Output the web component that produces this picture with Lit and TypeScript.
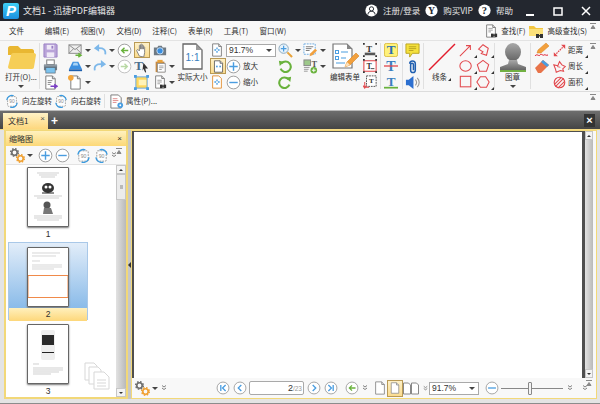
import { LitElement, html, css, svg, TemplateResult } from "lit";
import { customElement } from "lit/decorators.js";

// icon bodies, all drawn in a 16x16 box unless the caller says otherwise
const RED = "#e2484d";
const BLUE = "#4a9de0";
const GREEN = "#69b23c";
const DARK = "#23272f";

const glyph = (x: number, y: number, size: number, fill: string, text = "T") =>
  svg`<text x=${x} y=${y} font-size=${size} font-family="Liberation Serif" font-weight="700" fill=${fill} text-anchor="middle">${text}</text>`;

const handles = svg`<g fill="#333"><rect x="0" y="0" width="2" height="2"/><rect x="14" y="0" width="2" height="2"/><rect x="0" y="14" width="2" height="2"/><rect x="14" y="14" width="2" height="2"/></g>`;
const page = svg`<path d="M3 1h7l3 3v11H3z" fill="#fff" stroke="#777"/><path d="M10 1v3h3" fill="#ddd" stroke="#777"/>`;
const binoc = svg`<g fill="#333"><rect x="8" y="11" width="3" height="4"/><rect x="12" y="11" width="3" height="4"/><rect x="10" y="12" width="3" height="1.500"/></g>`;
const gear = (cx: number, cy: number, c: string) =>
  svg`<circle cx=${cx} cy=${cy} r="2.700" fill="none" stroke=${c} stroke-width="1.600"/><circle cx=${cx} cy=${cy} r="3.800" fill="none" stroke=${c} stroke-width="1.500" stroke-dasharray="1.500 1.500"/>`;

const ICONS: Record<string, TemplateResult> = {
  save: svg`<path d="M1 1h13l1 1v13H1z" fill="#b9a3d8" stroke="#9a80c4"/><rect x="4" y="2" width="8" height="5" fill="#efe9f7"/><rect x="4" y="10" width="8" height="5" fill="#efe9f7"/><rect x="9" y="3" width="2" height="3" fill="#9a80c4"/>`,
  print: svg`<rect x="4" y="1" width="8" height="5" fill="#fff" stroke="#777"/><path d="M1 6h14v6H1z" fill="#6f7a84"/><rect x="1" y="6" width="14" height="2" fill="#8e99a3"/><rect x="3" y="9" width="10" height="6" fill="#7cc3ee" stroke="#5a6570" stroke-width=".7"/>`,
  exportdoc: svg`${page}<path d="M5 6h5M5 8h4M5 10h3" stroke="#888"/><path d="M8 12h6M12 10l3 2-3 2" fill="none" stroke="#7a3fc4" stroke-width="1.400"/>`,
  mail: svg`<rect x="1" y="2" width="13" height="9" fill="#eee" stroke="#888"/><path d="M1 2l6.500 5L14 2M1 11l5-5M14 11L9 6" fill="none" stroke="#888"/><path d="M8 13h5M11 11l3 2-3 2" fill="none" stroke="${GREEN}" stroke-width="1.500"/>`,
  scan: svg`<path d="M5 3h6l4 8H1z" fill="#3c8fe0"/><path d="M1 11h14v2H1z" fill="#1d5fae"/><path d="M6 4h4l1 3H5z" fill="#a8d3f5"/>`,
  newdoc: svg`${page}<circle cx="3" cy="3" r="3" fill="#f4a63a"/>`,
  undo: svg`<path d="M14 13c1-5-2-8-9-7" fill="none" stroke="#7db8ea" stroke-width="2"/><path d="M7 1L1 6l6 4z" fill="#7db8ea"/>`,
  redo: svg`<path d="M2 13C1 8 4 5 11 6" fill="none" stroke="#7db8ea" stroke-width="2"/><path d="M9 1l6 5-6 4z" fill="#7db8ea"/>`,
  back: svg`<circle cx="8" cy="8" r="6.800" fill="#fff" stroke="#9a9a9a"/><path d="M12 8H5M8 5L5 8l3 3" fill="none" stroke="${GREEN}" stroke-width="1.500"/>`,
  fwd: svg`<circle cx="8" cy="8" r="6.800" fill="#fff" stroke="#bdbdbd"/><path d="M4 8h7M8 5l3 3-3 3" fill="none" stroke="#b9d9a5" stroke-width="1.500"/>`,
  hand: svg`<path d="M5 15L2 9c-.5-1 1-2 2-1l1 1V3c0-1 1.500-1 1.500 0v4-5c0-1 1.500-1 1.500 0v5-4c0-1 1.500-1 1.500 0v4-2c0-1 1.500-1 1.500 0v6l-1 5z" fill="#fff" stroke="#777"/>`,
  textsel: svg`${glyph(5, 12, 14, "#4d6f8d")}<path d="M10 4l5 6h-3l1 4-1 .5-2-4-1 2z" fill="#333"/>`,
  snap: svg`<rect x="2" y="2" width="12" height="12" fill="#ffd75a" stroke="#68a8e0"/><rect x="5" y="5" width="8" height="6" fill="#fff3b8"/><g fill="${BLUE}"><rect x="0" y="0" width="3" height="3"/><rect x="13" y="0" width="3" height="3"/><rect x="0" y="13" width="3" height="3"/><rect x="13" y="13" width="3" height="3"/></g>`,
  camera: svg`<path d="M1 5h4l1-2h4l1 2h4v9H1z" fill="#6f7a84"/><circle cx="8" cy="9" r="3.600" fill="#3a8ee0" stroke="#cfe4f7"/>`,
  clip: svg`<path d="M3 3h10v12H3z" fill="#c98a3e"/><path d="M5 5h9v10H5z" fill="#fff" stroke="#888"/><rect x="5" y="1" width="6" height="3" fill="#e9a33a"/><path d="M7 8h5M7 10h5M7 12h3" stroke="#999"/>`,
  finddoc: svg`${page}<path d="M5 6h5M5 8h5M5 10h3" stroke="#999"/>${binoc}`,
  fitw: svg`${page}<path d="M8 5v2M8 9v2M5 8h2M9 8h2" stroke="${BLUE}" stroke-width="1.500"/>`,
  fitp: svg`<path d="M3 1h7l3 3v11H3z" fill="#fff" stroke="#555"/><path d="M10 1v3h3" fill="#ddd" stroke="#555"/><rect x="5" y="7" width="2" height="2" fill="${BLUE}"/><rect x="9" y="7" width="2" height="2" fill="${BLUE}"/>`,
  fito: svg`<path d="M3 1h7l3 3v11H3z" fill="#fff" stroke="#e08a2a"/><path d="M8 5v2M8 9v2M5 8h2M9 8h2" stroke="${BLUE}" stroke-width="1.500"/>`,
  plus: svg`<circle cx="8" cy="8" r="6.800" fill="#fff" stroke="#9a9a9a"/><path d="M3.500 8h9M8 3.500v9" stroke="${BLUE}" stroke-width="1.500"/>`,
  minus: svg`<circle cx="8" cy="8" r="6.800" fill="#fff" stroke="#9a9a9a"/><path d="M3.500 8h9" stroke="${BLUE}" stroke-width="1.500"/>`,
  zoomin: svg`<circle cx="6" cy="6" r="5" fill="#e6f2fb" stroke="#8aa7bd"/><path d="M3 6h6M6 3v6" stroke="${BLUE}" stroke-width="1.300"/><path d="M10 10l5 5" stroke="#e8a33a" stroke-width="2.200"/>`,
  rotl: svg`<path d="M4 5a6 6 0 1 1-1 6" fill="none" stroke="${GREEN}" stroke-width="2.400"/><path d="M1 2l6 1-5 5z" fill="${GREEN}"/>`,
  rotr: svg`<path d="M12 5a6 6 0 1 0 1 6" fill="none" stroke="${GREEN}" stroke-width="2.400"/><path d="M15 2l-6 1 5 5z" fill="${GREEN}"/>`,
  formtext: svg`<rect x="1" y="1" width="12" height="11" fill="#fff" stroke="#68a8e0" stroke-dasharray="2 1"/><path d="M3 4h8M3 6h6M3 8h4" stroke="#777"/><path d="M7 14l1-3 5-5 2 2-5 5z" fill="#f2a03d"/>`,
  formimg: svg`<rect x="1" y="1" width="7" height="6" fill="#9dc88a" stroke="#888"/>${glyph(12, 8, 9, "#555")}<path d="M1 9h6M1 11h5M1 13h4" stroke="#999"/><circle cx="11.500" cy="12" r="3.500" fill="${GREEN}"/><path d="M9.500 12h4M11.500 10v4" stroke="#fff"/>`,
  editform: svg`<path d="M2 1h14l5 5v19H2z" fill="#fff" stroke="#777" stroke-width="1.200"/><path d="M16 1v5h5z" fill="#888"/><g fill="#fff" stroke="${BLUE}"><rect x="4.500" y="7.500" width="3" height="3"/><rect x="4.500" y="13.500" width="3" height="3"/></g><path d="M10 9h7M10 15h5M5 20h9" stroke="${BLUE}" stroke-width="1.200"/><path d="M14 24l2-5 9-9 3 3-9 9z" fill="#f2a03d" stroke="#d98420" stroke-width=".6"/><path d="M14 24l2-5 3 3z" fill="#fbe2bd"/>`,
  tbox1: svg`${handles}${glyph(7, 10, 10, "#333")}<rect x="2" y="11" width="12" height="3" fill="#555"/>`,
  tbox2: svg`<rect x="1" y="2" width="14" height="12" fill="#fff" stroke="${RED}" stroke-width="1.200"/>${handles}${glyph(7, 11, 9, "#333")}<path d="M9 11h4" stroke="#333"/>`,
  tbox3: svg`<rect x="4" y="1" width="11" height="12" fill="#fff" stroke="#444" stroke-dasharray="2 1"/>${glyph(9.500, 9, 8, "#333")}<path d="M2 8v6h5M0 12l2 3 2-3" fill="none" stroke="${RED}" stroke-width="1.200"/>`,
  thi: svg`<rect x=".5" y=".5" width="15" height="15" rx="2" fill="#fff27a" stroke="#d9b93a"/>${glyph(8, 13, 15, "#2a6fb3")}`,
  tstrike: svg`${glyph(8, 14, 16, "#3a7fc0")}<path d="M0 8h16" stroke="${RED}" stroke-width="1.500"/>`,
  tunder: svg`${glyph(8, 12, 15, "#3a7fc0")}<path d="M0 14.500h16" stroke="${GREEN}" stroke-width="2"/>`,
  note: svg`<path d="M1 1h14v10H8l-3 4v-4H1z" fill="#f5e13c" stroke="#b9a21f"/><path d="M4 4h8M4 6h8M4 8h5" stroke="#b9a21f"/>`,
  paperclip: svg`<path d="M5 5a3 3 0 0 1 6 0v7a2.500 2.500 0 0 1-5 0V6a1.500 1.500 0 0 1 3 0v6" fill="none" stroke="#1f5fb0" stroke-width="1.600"/>`,
  speaker: svg`<path d="M1 5h3l5-4v14l-5-4H1z" fill="#2c6fd0"/><path d="M11 5a4 4 0 0 1 0 6M13 3a7 7 0 0 1 0 10" fill="none" stroke="#999" stroke-width="1.200"/>`,
  arrow: svg`<path d="M1 15L13 3M8 3h5v5" fill="none" stroke="${RED}" stroke-width="1.200"/>`,
  circle: svg`<ellipse cx="7.500" cy="8" rx="6.500" ry="6" fill="none" stroke="${RED}" stroke-width="1.200"/>`,
  rect: svg`<rect x="1.500" y="1.500" width="12" height="12" fill="none" stroke="${RED}" stroke-width="1.200"/>`,
  polyopen: svg`<path d="M3 7l5-5 6 4-2 8-6-2 2-2z" fill="none" stroke="${RED}" stroke-width="1.200"/>`,
  pent: svg`<path d="M8 1.500l6.500 5-2.500 7.500H4L1.500 6.500z" fill="none" stroke="${RED}" stroke-width="1.200"/>`,
  hex: svg`<path d="M5 2h6l4 6-3 6H5L1 8z" fill="none" stroke="${RED}" stroke-width="1.200"/>`,
  pencil: svg`<path d="M3 11l1-3 8-7 3 3-8 7z" fill="#f2a03d" stroke="#d98420" stroke-width=".5"/><path d="M1 14c2-3 4 1 5-1s3 1 4 0 2 1 4 0" fill="none" stroke="#e21c2c"/>`,
  eraser: svg`<path d="M1 10l8-8 6 5-8 8H4z" fill="#e8744a"/><path d="M7 4l2-2 6 5-2 2z" fill="#4a9de0"/>`,
  dist: svg`<path d="M2 14L14 2" stroke="${RED}" stroke-width="1.500" stroke-dasharray="2 1"/><path d="M1 10v5h5zM15 6V1h-5z" fill="${RED}"/>`,
  perim: svg`<path d="M1 6l5 1 2-5 3 4 4 2-3 3 1 3-4-1-5 2-1-4z" fill="none" stroke="${RED}" stroke-width="1.300"/><path d="M5 8l4 1" stroke="${RED}"/>`,
  area: svg`<circle cx="8" cy="8" r="6.500" fill="none" stroke="${RED}" stroke-width="1.400"/><path d="M2 10l8-8M3 13l10-10M6 15l8-8" stroke="${RED}" stroke-width="1.300"/>`,
  find: svg`${page}<path d="M5 5h5M5 7h5M5 9h3" stroke="#999"/>${binoc}`,
  findadv: svg`<path d="M1 3h5l2 2h7v8H1z" fill="#f3c640"/><path d="M1 6h14v7H1z" fill="#fbe07a"/>${binoc}`,
  rot90l: svg`<rect x="3" y="3" width="10" height="11" rx="1" fill="#fff" stroke="#999" stroke-dasharray="2 1"/><path d="M2 7a6 6 0 0 1 8-5M14 10a6 6 0 0 1-8 5" fill="none" stroke="#3a9be0" stroke-width="1.400"/><text x="8" y="10.500" font-size="5.500" text-anchor="middle" fill="#888" font-family="Liberation Sans">90</text>`,
  rot90r: svg`<rect x="3" y="3" width="10" height="11" rx="1" fill="#fff" stroke="#999" stroke-dasharray="2 1"/><path d="M14 7a6 6 0 0 0-8-5M2 10a6 6 0 0 0 8 5" fill="none" stroke="#3a9be0" stroke-width="1.400"/><text x="8" y="10.500" font-size="5.500" text-anchor="middle" fill="#888" font-family="Liberation Sans">90</text>`,
  props: svg`<path d="M2 1h8l3 3v11H2z" fill="#fff" stroke="#777"/><path d="M4 5h5M4 7h6M4 9h4" stroke="#e08a8a"/><circle cx="12" cy="12" r="3" fill="#4a9de0"/><circle cx="12" cy="12" r="1" fill="#fff"/>`,
  gears: svg`${gear(5.500, 5.500, "#6d6d6d")}${gear(11.500, 11.500, "#f0a030")}`,
  first: svg`<circle cx="8" cy="8" r="6.800" fill="#fff" stroke="#9a9a9a"/><path d="M5.500 4.500v7" stroke="${BLUE}" stroke-width="1.500"/><path d="M11 4.500L7.500 8l3.500 3.500" fill="none" stroke="${BLUE}" stroke-width="1.500"/>`,
  prev: svg`<circle cx="8" cy="8" r="6.800" fill="#fff" stroke="#9a9a9a"/><path d="M9.500 4.500L6 8l3.500 3.500" fill="none" stroke="${BLUE}" stroke-width="1.500"/>`,
  next: svg`<circle cx="8" cy="8" r="6.800" fill="#fff" stroke="#9a9a9a"/><path d="M6.500 4.500L10 8l-3.500 3.500" fill="none" stroke="${BLUE}" stroke-width="1.500"/>`,
  last: svg`<circle cx="8" cy="8" r="6.800" fill="#fff" stroke="#9a9a9a"/><path d="M10.500 4.500v7" stroke="${BLUE}" stroke-width="1.500"/><path d="M5 4.500L8.500 8 5 11.500" fill="none" stroke="${BLUE}" stroke-width="1.500"/>`,
  single: svg`<path d="M3 1h7l3 3v11H3z" fill="#fff" stroke="#888"/><path d="M10 1v3h3" fill="#ddd" stroke="#888"/>`,
  two: svg`<path d="M.5 3h5l2 2v9h-7z" fill="#fff" stroke="#888"/><path d="M8.500 3h5l2 2v9h-7z" fill="#fff" stroke="#888"/>`,
  more: svg`<path d="M4 3l4 3 4-3M4 8l4 3 4-3" fill="none" stroke="#555" stroke-width="1.500"/>`,
  user: svg`<circle cx="8" cy="8" r="7.500" fill="#fff"/><circle cx="8" cy="6" r="2.600" fill="none" stroke="${DARK}" stroke-width="1.200"/><path d="M3.500 13c.5-3 2-4 4.500-4s4 1 4.500 4" fill="none" stroke="${DARK}" stroke-width="1.200"/>`,
  vip: svg`<circle cx="8" cy="8" r="7.500" fill="#fff"/>${glyph(8, 12.500, 12, DARK, "Y")}`,
  help: svg`<circle cx="8" cy="8" r="7.500" fill="#fff"/>${glyph(8, 12.500, 13, DARK, "?")}`,
};

const icon = (name: string, w = 15, h = w) =>
  html`<svg class="ic" width=${w} height=${h} viewBox="0 0 16 ${(16 * h) / w}">${ICONS[name]}</svg>`;

const caret = html`<i class="caret"></i>`;
const corner = html`<i class="corner"></i>`;
const pin = html`<svg class="pin" width="6" height="6" viewBox="0 0 6 6"><path d="M0 .5h6M1 5.500l2-3 2 3z" stroke="#888" fill="#888" /></svg>`;

const MENUS = ["文件", "编辑(E)", "视图(V)", "文档(D)", "注释(C)", "表单(R)", "工具(T)", "窗口(W)"];

@customElement("app-root")
export class AppRoot extends LitElement {
  static styles = css`
    :host {
      display: block;
      width: 600px;
      height: 404px;
      overflow: hidden;
      background: #e4e4e4;
      font-family: "Noto Sans CJK SC", "Liberation Sans", sans-serif;
      font-size: 7.500px;
      color: #2e2e2e;
      line-height: 1;
    }
    .ic {
      display: block;
      flex: none;
    }
    .caret {
      display: block;
      flex: none;
      width: 0;
      height: 0;
      border: 3px solid transparent;
      border-top-color: #444;
      border-bottom: 0;
    }
    .corner {
      display: block;
      flex: none;
      align-self: flex-end;
      width: 0;
      height: 0;
      border-left: 3px solid transparent;
      border-bottom: 3px solid #333;
    }
    .pin {
      display: block;
    }
    .pinned {
      position: absolute;
      right: 4px;
      top: 2px;
    }

    /* title bar */
    .title {
      height: 21px;
      background: #23272f;
      color: #e6e6e6;
      display: flex;
      align-items: center;
      padding-left: 3px;
      font-size: 9px;
    }
    .logo {
      width: 16px;
      height: 16px;
      border-radius: 2px;
      background: linear-gradient(#3fd0f7, #1a8fe0);
      color: #fff;
      font: italic bold 15px/16px "Liberation Sans", sans-serif;
      text-align: center;
      margin-right: 4px;
    }
    .doc-name {
      flex: 1;
    }
    .account {
      display: flex;
      align-items: center;
      font-size: 8.500px;
    }
    .account .ic {
      margin-right: 5px;
    }
    .account span {
      margin-right: 5px;
    }
    .winbtns {
      display: grid;
      grid-template-columns: 27px 28px 10px;
      align-items: center;
      width: 82px;
      padding-left: 8px;
      box-sizing: border-box;
    }
    .winbtns svg {
      display: block;
    }

    /* menu row */
    .menu {
      height: 19px;
      background: #f8f8f8;
      display: flex;
      align-items: center;
      padding-left: 9px;
      position: relative;
    }
    .menu > span {
      width: 35.800px;
    }
    .menu .grow {
      flex: 1;
    }
    .finds {
      display: flex;
      align-items: center;
      gap: 3px;
      padding-right: 13px;
    }

    /* ribbon, one track per tool column */
    .ribbon {
      height: 52px;
      background: #f7f7f7;
      border-top: 1px solid #e3e3e3;
      border-bottom: 1px solid #dcdcdc;
      box-sizing: border-box;
      padding-left: 3px;
      position: relative;
      display: grid;
      grid-template-columns:
        36px 1px 28px 25px 24px 17px 19px 24px 31px 18px 52px 25px 26px 32px 19px 1px 21px 1px 20px
        1px 35px 17px 18px 1px 35px 1px 22px 39px;
    }
    .sep {
      background: #e0e0e0;
      margin: 2px 0;
    }
    .big {
      display: flex;
      flex-direction: column;
      align-items: center;
      padding-top: 2px;
    }
    .art {
      height: 30px;
      flex: none;
    }
    .big b {
      font-weight: 400;
      height: 8px;
      white-space: nowrap;
      display: flex;
      align-items: center;
      gap: 1px;
    }
    .big .caret {
      margin-top: 4px;
    }
    .col {
      display: grid;
      grid-template-rows: repeat(3, 16px);
      align-items: center;
      justify-items: start;
      padding-top: 1px;
    }
    .p2 {
      padding-left: 2px;
    }
    .p3 {
      padding-left: 3px;
    }
    .row {
      display: flex;
      align-items: center;
      gap: 2px;
      height: 16px;
    }
    .row.tight {
      gap: 1px;
    }
    .on {
      display: flex;
      align-items: center;
      justify-content: center;
      width: 16px;
      height: 16px;
      box-sizing: border-box;
      background: linear-gradient(#fdf0c8, #fbdc8e);
      border: 1px solid #b99a55;
    }
    .zoombox {
      width: 50px;
      height: 13px;
      box-sizing: border-box;
      border: 1px solid #a9a9a9;
      background: #fff;
      display: flex;
      align-items: center;
      justify-content: space-between;
      padding: 0 3px 0 2px;
      font: 8.500px "Liberation Sans", sans-serif;
      color: #333;
    }

    /* small toolbar */
    .bar2 {
      height: 19px;
      background: #f8f8f8;
      border-bottom: 1px solid #b9b9b9;
      box-sizing: border-box;
      display: flex;
      align-items: center;
      padding-left: 5px;
      position: relative;
    }
    .bar2 span {
      margin: 0 2px 0 3px;
      white-space: nowrap;
    }
    .bar2 span.last {
      margin: 0 3px 0 3px;
    }
    .bar2 .sep {
      width: 1px;
      height: 14px;
      margin: 0 4px 0 0;
    }
    .bar2 .props {
      margin: 0 0 0 2px;
    }

    /* document tabs */
    .tabs {
      height: 18px;
      background: linear-gradient(#6e6e6e, #454545);
      display: flex;
      align-items: flex-end;
      padding-left: 3px;
      position: relative;
      box-sizing: border-box;
    }
    .tab {
      width: 45px;
      height: 16px;
      box-sizing: border-box;
      background: linear-gradient(#fff2c6, #fdd77d);
      padding: 4px 0 0 5px;
      position: relative;
      font-size: 8px;
    }
    .tab u {
      position: absolute;
      right: 3px;
      top: 1px;
      text-decoration: none;
      font: 8px "Liberation Sans", sans-serif;
      color: #555;
    }
    .add {
      color: #fff;
      font: bold 12px/15px "Liberation Sans", sans-serif;
      margin-left: 3px;
    }
    .tabs .close {
      position: absolute;
      right: 5px;
      top: 3px;
      width: 11px;
      height: 13px;
      background: #333;
      color: #fff;
      font: bold 11px/13px "Liberation Sans", sans-serif;
      text-align: center;
    }

    /* work area */
    .work {
      height: 275px;
      box-sizing: border-box;
      border-top: 1px solid #f7dc85;
      border-bottom: 1px solid #8c8c8c;
      display: flex;
      padding: 0 3px 4px 4px;
    }
    .panel {
      width: 124px;
      flex: none;
      background: #fff;
      border: solid #f2d878;
      border-width: 1px 2px 2px 2px;
      box-sizing: border-box;
      display: flex;
      flex-direction: column;
    }
    .panel-head {
      height: 15px;
      flex: none;
      background: linear-gradient(#fff1bf, #fcd877);
      display: flex;
      align-items: center;
      justify-content: space-between;
      padding: 0 4px 0 3px;
      font-size: 8px;
    }
    .panel-head u {
      text-decoration: none;
      font: 8px "Liberation Sans", sans-serif;
    }
    .panel-tools {
      height: 19px;
      flex: none;
      background: #f8f8f8;
      border-bottom: 1px solid #e3e3e3;
      box-sizing: border-box;
      display: grid;
      grid-template-columns: 29px 17px 21px 18px 16px 9px 6px;
      align-items: center;
      padding-left: 3px;
      position: relative;
    }
    .panel-body {
      flex: 1;
      min-height: 0;
      display: flex;
    }
    .list {
      flex: 1;
      padding: 2px 0 0 2px;
      position: relative;
      overflow: hidden;
    }
    .thumb {
      width: 80px;
      display: flex;
      flex-direction: column;
      align-items: center;
      font: 8.500px "Liberation Sans", sans-serif;
    }
    .thumb em {
      font-style: normal;
      height: 15px;
      line-height: 15px;
      align-self: stretch;
      text-align: center;
    }
    .thumb.sel {
      background: linear-gradient(#e2edf9, #7ab2e6);
      height: 78px;
      box-sizing: border-box;
      padding-top: 4px;
      border: solid #a9c8e8;
      border-width: 1px 1px 0 1px;
    }
    .thumb.sel em {
      background: linear-gradient(#fff0bd, #fdd77a);
      height: 13px;
      line-height: 13px;
      margin-top: 1px;
    }
    .thumb.last {
      padding-top: 4px;
    }
    .page {
      width: 42px;
      height: 60px;
      box-sizing: border-box;
      flex: none;
      display: block;
      background: #fff;
      border: 1px solid #666;
      border-radius: 1px;
      box-shadow: 0 1px 2px #777;
    }
    .ghost {
      position: absolute;
      right: 6px;
      bottom: 7px;
      opacity: 0.32;
    }
    .sb {
      width: 10px;
      flex: none;
      background: linear-gradient(90deg, #e2e2e2, #b9b9b9);
      display: flex;
      flex-direction: column;
      justify-content: space-between;
    }
    .sb-btn {
      height: 9px;
      background: #f4f4f4;
      border: 1px solid #c6c6c6;
      box-sizing: border-box;
      display: flex;
      align-items: center;
      justify-content: center;
    }
    .sb-up {
      width: 0;
      height: 0;
      border: 2.500px solid transparent;
      border-bottom-color: #333;
      border-top: 0;
    }
    .sb-down {
      width: 0;
      height: 0;
      border: 2.500px solid transparent;
      border-top-color: #333;
      border-bottom: 0;
    }
    .sb-top {
      display: flex;
      flex-direction: column;
    }
    .sb-thumb {
      height: 26px;
      background: #ececec;
      border: 1px solid #c6c6c6;
      box-sizing: border-box;
      display: flex;
      align-items: center;
      justify-content: center;
    }
    .sb-thumb i {
      width: 3px;
      height: 4px;
      background: #b9b9b9;
    }
    .split {
      width: 3px;
      flex: none;
      background: #c7c7c7;
      display: flex;
      align-items: center;
    }
    .split i {
      display: block;
      width: 0;
      height: 0;
      border: 3px solid transparent;
      border-right-color: #333;
      border-left: 0;
    }
    .viewer {
      flex: 1;
      min-width: 0;
      display: flex;
      flex-direction: column;
      border: 1px solid #f2d878;
      background: #f8f8f8;
    }
    .view-main {
      flex: 1;
      min-height: 0;
      display: flex;
    }
    .view-dark {
      flex: 1;
      display: flex;
      background: #4f4f4f;
      padding: 1px 3px 0 2px;
    }
    .sheet {
      flex: 1;
      background: #fff;
    }
    .view-sb {
      width: 8px;
      flex: none;
      margin-right: 3px;
      background: linear-gradient(90deg, #e2e2e2, #b9b9b9);
      display: flex;
      flex-direction: column;
      justify-content: space-between;
    }
    .view-bar {
      height: 20px;
      flex: none;
      background: #f8f8f8;
      box-sizing: border-box;
      display: grid;
      grid-template-columns:
        26px 56px 17px 16px 58px 17px 21px 16px 12px 14px 16px 19px 7px 56px 16px 65px 15px 9px;
      align-items: center;
      justify-items: start;
      padding-left: 2px;
      position: relative;
    }
    .pageno {
      width: 55px;
      height: 14px;
      box-sizing: border-box;
      border: 1px solid #a9a9a9;
      border-radius: 2px;
      background: #fff;
      display: flex;
      align-items: center;
      justify-content: flex-end;
      padding-right: 1px;
      font: 9px "Liberation Sans", sans-serif;
      color: #333;
    }
    .pageno small {
      font-size: 6.500px;
      color: #999;
    }
    .picked {
      width: 16px;
      height: 17px;
      box-sizing: border-box;
      background: linear-gradient(#fdf0c8, #fbdc8e);
      border: 1px solid #b99a55;
      display: flex;
      align-items: center;
      justify-content: center;
    }
    .slider {
      width: 62px;
      height: 9px;
      position: relative;
      display: flex;
      align-items: center;
    }
    .slider::before {
      content: "";
      flex: 1;
      height: 1px;
      background: #888;
    }
    .slider i {
      position: absolute;
      left: 27px;
      top: -2px;
      width: 4px;
      height: 13px;
      border: 1px solid #888;
      background: #f4f4f4;
      border-radius: 1px;
      box-sizing: border-box;
    }
  `;

  private _row(...items: unknown[]) {
    return html`<div class="row">${items}</div>`;
  }

  private _ribbon() {
    return html`
      <div class="ribbon">
        <div class="big">
          <svg class="ic art" width="29" height="30" viewBox="0 0 29 30">
            <path d="M1 5c0-1 1-2 2-2h8l3 3h11c1 0 2 1 2 2v4H1z" fill="#e9b732" />
            <path d="M1 24c0 1 1 2 2 2h22c1 0 2-1 2-2l2-12c0-1-1-2-2-2H6c-1 0-2 1-2 2z" fill="#f6ce57" />
          </svg>
          <b>打开(O)...</b>
          ${caret}
        </div>
        <div class="sep"></div>
        <div class="col p3">${icon("save")}${icon("print")}${icon("exportdoc")}</div>
        <div class="col">
          ${this._row(icon("mail"), caret)}${this._row(icon("scan"), caret)}${this._row(icon("newdoc"), caret)}
        </div>
        <div class="col">${this._row(icon("undo", 14), caret)}${this._row(icon("redo", 14), caret)}</div>
        <div class="col">${icon("back")}${icon("fwd")}</div>
        <div class="col"><div class="on">${icon("hand", 14)}</div>${icon("textsel")}${icon("snap")}</div>
        <div class="col">
          ${icon("camera", 14)}${this._row(icon("clip", 14), caret)}${this._row(icon("finddoc", 14), caret)}
        </div>
        <div class="big">
          <svg class="ic art" width="22" height="30" viewBox="0 0 22 30">
            <path d="M1 1h13l6 6v19H1z" fill="#fff" stroke="#666" stroke-width="1.300" />
            <path d="M14 1v6h6z" fill="#999" />
            <text x="10.500" y="18" text-anchor="middle" font-size="10" fill="#3a7fc0" font-family="Liberation Sans">1:1</text>
          </svg>
          <b>实际大小</b>
        </div>
        <div class="col p2">${icon("fitw", 14)}<div class="on">${icon("fitp", 13)}</div>${icon("fito", 14)}</div>
        <div class="col">
          <div class="zoombox">91.7%${caret}</div>
          <div class="row">${icon("plus")}<span>放大</span></div>
          <div class="row">${icon("minus")}<span>缩小</span></div>
        </div>
        <div class="col">${this._row(icon("zoomin"), caret)}${icon("rotl", 14)}${icon("rotr", 14)}</div>
        <div class="col">${this._row(icon("formtext"), caret)}${this._row(icon("formimg"), caret)}</div>
        <div class="big">
          <svg class="ic art" width="29" height="30" viewBox="0 0 29 30">${ICONS.editform}</svg>
          <b>编辑表单</b>
        </div>
        <div class="col p2">${icon("tbox1", 14)}${icon("tbox2", 14)}${icon("tbox3", 14)}</div>
        <div class="sep"></div>
        <div class="col p3">${icon("thi", 14)}${icon("tstrike", 14)}${icon("tunder", 14)}</div>
        <div class="sep"></div>
        <div class="col p2">${icon("note")}${icon("paperclip")}${icon("speaker")}</div>
        <div class="sep"></div>
        <div class="big">
          <svg class="ic art" width="28" height="30" viewBox="0 0 28 30"><path d="M1 27L27 1" stroke="#e21c2c" stroke-width="1.400" /></svg>
          <b>线条${corner}</b>
        </div>
        <div class="col">
          <div class="row tight">${icon("arrow", 14)}${corner}</div>
          <div class="row tight">${icon("circle", 14)}${corner}</div>
          <div class="row tight">${icon("rect", 14)}${corner}</div>
        </div>
        <div class="col">
          <div class="row tight">${icon("polyopen", 14)}${corner}</div>
          <div class="row tight">${icon("pent", 14)}${corner}</div>
          <div class="row tight">${icon("hex", 14)}${corner}</div>
        </div>
        <div class="sep"></div>
        <div class="big">
          <svg class="ic art" width="28" height="30" viewBox="0 0 28 30">
            <defs>
              <linearGradient id="st" x1="0" y1="0" x2="0" y2="1"><stop offset="0" stop-color="#a8a8a8" /><stop offset="1" stop-color="#666" /></linearGradient>
            </defs>
            <ellipse cx="14" cy="9" rx="8" ry="9" fill="url(#st)" />
            <path d="M10 17h8l1 4 8 3v3H1v-3l8-3z" fill="url(#st)" />
            <rect x="1" y="27" width="26" height="2" fill="#72b043" />
          </svg>
          <b>图章</b>
          ${caret}
        </div>
        <div class="sep"></div>
        <div class="col p3">${icon("pencil", 16)}${icon("eraser", 16)}</div>
        <div class="col">
          ${this._row(icon("dist", 13), html`<span>距离</span>`, corner)}
          ${this._row(icon("perim", 13), html`<span>周长</span>`, corner)}
          ${this._row(icon("area", 13), html`<span>面积</span>`, corner)}
        </div>
        <div class="pinned">${pin}</div>
      </div>
    `;
  }

  private _panel() {
    return html`
      <div class="panel">
        <div class="panel-head"><span>缩略图</span><u>×</u></div>
        <div class="panel-tools">
          ${this._row(icon("gears", 16), caret)}
          ${icon("plus", 15)}${icon("minus", 15)}
          ${icon("rot90l", 15)}${icon("rot90r", 15)}${icon("more", 8, 8)}
          <div class="pinned">${pin}</div>
        </div>
        <div class="panel-body">
          <div class="list">
            <div class="thumb">
              <svg class="page" viewBox="0 0 40 58">
                <path d="M9 5h22M11 7h18M13 9h14M6 28h28M9 30h22M6 48h28M6 50h28M9 52h22" stroke="#bbb" stroke-width=".7" />
                <ellipse cx="20" cy="20" rx="6" ry="5" fill="#333" />
                <circle cx="18" cy="19" r="1.500" fill="#fff" />
                <circle cx="22" cy="19" r="1.500" fill="#fff" />
                <path d="M14 25h12" stroke="#222" />
                <circle cx="19" cy="37" r="3.500" fill="#555" />
                <path d="M15 46l1-6h7l2 6z" fill="#777" />
              </svg>
              <em>1</em>
            </div>
            <div class="thumb sel">
              <svg class="page" viewBox="0 0 40 58">
                <path d="M4 5h28M4 8h24M4 13h8M4 17h30M4 19h30M4 21h22" stroke="#c4c4c4" stroke-width=".7" />
                <rect x="0" y="27.500" width="40" height="22" fill="#fff" stroke="#f08a4a" />
              </svg>
              <em>2</em>
            </div>
            <div class="thumb last">
              <svg class="page" viewBox="0 0 40 58">
                <rect x="13" y="5" width="14" height="30" rx="2" fill="#eee" />
                <rect x="14" y="10" width="12" height="10" fill="#2a2a2a" />
                <rect x="14" y="27" width="12" height="1" fill="#222" />
                <path d="M5 39h6M5 43h30M5 45h30M5 47h26M5 49h18" stroke="#bbb" stroke-width=".7" />
              </svg>
              <em>3</em>
            </div>
            <svg class="ghost" width="26" height="28" viewBox="0 0 26 28">
              <g fill="#fff" stroke="#888">
                <path d="M1 1h9l3 3v14H1z" />
                <path d="M5 5h9l3 3v14H5z" />
                <path d="M10 10h10l5 5v12H10z" />
              </g>
              <path d="M13 18h9M13 21h9M13 24h9" stroke="#888" />
            </svg>
          </div>
          <div class="sb">
            <div class="sb-top">
              <div class="sb-btn"><i class="sb-up"></i></div>
              <div class="sb-thumb"><i></i></div>
            </div>
            <div class="sb-btn"><i class="sb-down"></i></div>
          </div>
        </div>
      </div>
    `;
  }

  private _viewer() {
    return html`
      <div class="viewer">
        <div class="view-main">
          <div class="view-dark"><div class="sheet"></div></div>
          <div class="view-sb">
            <div class="sb-btn"><i class="sb-up"></i></div>
            <div class="sb-btn"><i class="sb-down"></i></div>
          </div>
        </div>
        <div class="view-bar">
          ${this._row(icon("gears", 16), caret)}
          ${icon("more", 8, 8)}
          ${icon("first", 14)}${icon("prev", 14)}
          <div class="pageno">2<small>/23</small></div>
          ${icon("next", 14)}${icon("last", 14)}${icon("back", 14)}
          ${icon("more", 8, 8)}
          ${icon("single", 14)}
          <div class="picked">${icon("single", 12)}</div>
          ${icon("two", 16)}
          ${icon("more", 7, 7)}
          <div class="zoombox">91.7%${caret}</div>
          ${icon("minus", 14)}
          <div class="slider"><i></i></div>
          ${icon("more", 8, 8)}${icon("more", 8, 8)}
          <div class="pinned">${pin}</div>
        </div>
      </div>
    `;
  }

  protected render(): TemplateResult {
    return html`
      <div class="title">
        <div class="logo">P</div>
        <div class="doc-name">文档1 - 迅捷PDF编辑器</div>
        <div class="account">${icon("user", 13)}<span>注册/登录</span></div>
        <div class="account">${icon("vip", 13)}<span>购买VIP</span></div>
        <div class="account">${icon("help", 13)}<span>帮助</span></div>
        <div class="winbtns">
          <svg width="8" height="10" viewBox="0 0 8 10"><path d="M0 9h8" stroke="#fff" stroke-width="2" /></svg>
          <svg width="10" height="10" viewBox="0 0 10 10"><rect x="1" y="2" width="8" height="7" fill="none" stroke="#fff" stroke-width="1.500" /></svg>
          <svg width="10" height="10" viewBox="0 0 10 10"><path d="M1 1l8 8M9 1L1 9" stroke="#fff" stroke-width="1.500" /></svg>
        </div>
      </div>
      <div class="menu">
        ${MENUS.map((m) => html`<span>${m}</span>`)}
        <div class="grow"></div>
        <div class="finds">
          ${icon("find", 14)}<span>查找(F)</span>${icon("findadv", 16)}<span>高级查找(S)</span>
        </div>
        <div class="pinned">${pin}</div>
      </div>
      ${this._ribbon()}
      <div class="bar2">
        ${icon("rot90l", 14)}<span>向左旋转</span>
        ${icon("rot90r", 14)}<span class="last">向右旋转</span>
        <div class="sep"></div>
        ${icon("props", 15)}<span class="props">属性(P)...</span>
        <div class="pinned">${pin}</div>
      </div>
      <div class="tabs">
        <div class="tab">文档1<u>×</u></div>
        <span class="add">+</span>
        <div class="close">×</div>
      </div>
      <div class="work">
        ${this._panel()}
        <div class="split"><i></i></div>
        ${this._viewer()}
      </div>
    `;
  }
}
